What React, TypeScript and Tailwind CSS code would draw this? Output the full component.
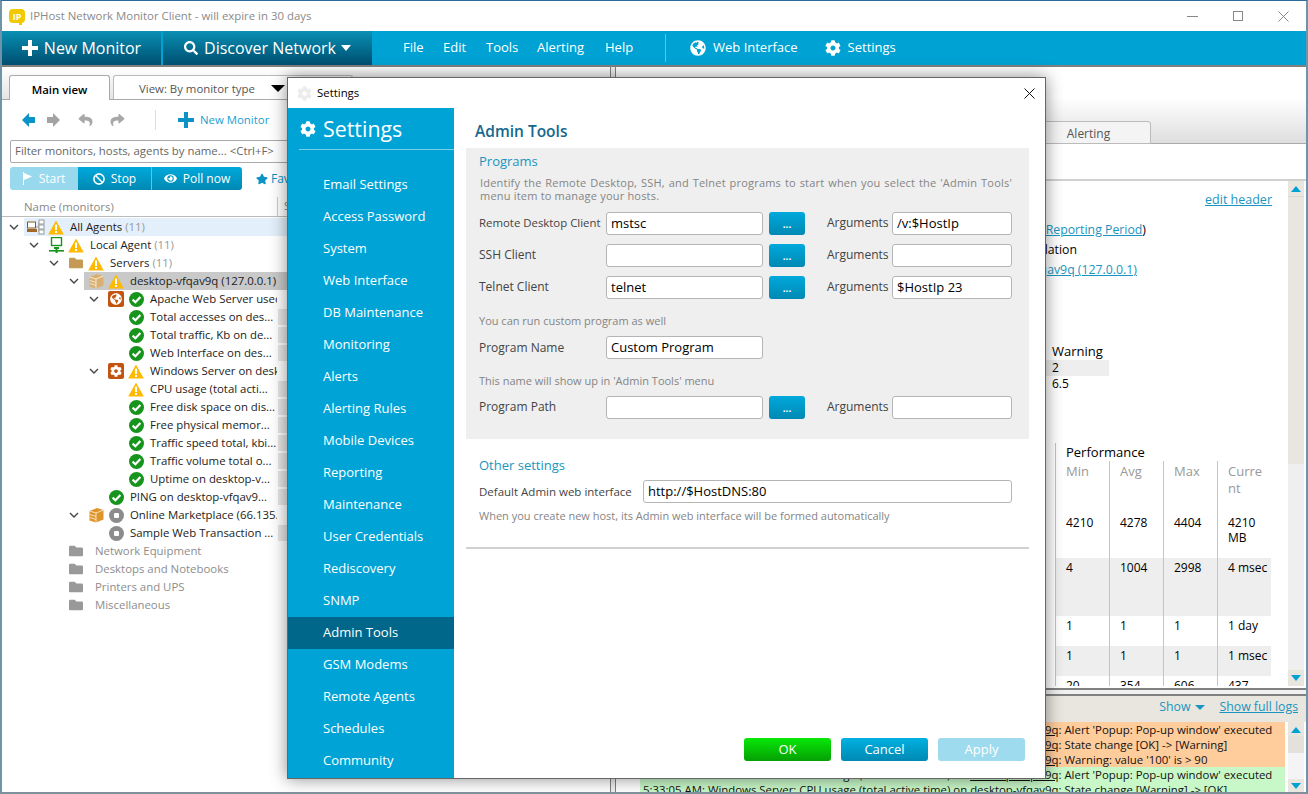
import type { ReactNode } from "react";
import { FaCog, FaGlobeAmericas, FaEye, FaBan, FaStar, FaReply, FaShare, FaSearch, FaFolder } from "react-icons/fa";

const Warn = () => (
  <svg viewBox="0 0 16 15" className="h-[15px] w-[16px]">
    <path d="M8 0.5 L15.8 14.5 H0.2 Z" fill="#ffb900" />
    <rect x="7" y="4.5" width="2" height="5.5" fill="#fff" />
    <rect x="7" y="11" width="2" height="2" fill="#fff" />
  </svg>
);

const Ok = () => (
  <svg viewBox="0 0 15 15" className="h-[15px] w-[15px]">
    <circle cx="7.5" cy="7.5" r="7.5" fill="#16941c" />
    <path d="M3.6 7.6 L6.4 10.2 L11.4 5" fill="none" stroke="#fff" strokeWidth="2.2" />
  </svg>
);

const Stopped = () => (
  <svg viewBox="0 0 15 15" className="h-[15px] w-[15px]">
    <circle cx="7.5" cy="7.5" r="7.5" fill="#8c8c8c" />
    <rect x="5" y="5" width="5" height="5" rx="1" fill="#fff" />
  </svg>
);

const Cube = ({ color }: { color: string }) => (
  <svg viewBox="0 0 15 16" className="h-[16px] w-[15px]">
    <path d="M0.5 4 L8 1 L14.5 3 V12.5 L7 15.5 L0.5 13.5 Z" fill={color} />
    <path d="M0.5 4 L7 6 L14.5 3 M7 6 V15.5 M1 7.5 L7 9.5 M1 10.5 L7 12.5" fill="none" stroke="#fff" strokeWidth="0.7" />
  </svg>
);

const Agents = () => (
  <svg viewBox="0 0 18 16" className="h-[16px] w-[18px]">
    <rect x="0.5" y="3" width="8" height="6" fill="#fff" stroke="#8a5a1c" />
    <rect x="0" y="10" width="10" height="3" fill="#a0692a" />
    <path d="M9 8 H12 M12 3 V13" stroke="#999" fill="none" />
    <rect x="12" y="1" width="5" height="4" fill="#fff" stroke="#999" />
    <rect x="12" y="6" width="5" height="4" fill="#fff" stroke="#999" />
    <rect x="12" y="11" width="5" height="4" fill="#fff" stroke="#999" />
  </svg>
);

const LocalAgent = () => (
  <svg viewBox="0 0 15 16" className="h-[16px] w-[15px]">
    <rect x="2.5" y="0.5" width="10" height="8" fill="#fff" stroke="#16941c" strokeWidth="1.4" />
    <rect x="5" y="10" width="5" height="2" fill="#16941c" />
    <rect x="0" y="13" width="15" height="1.6" fill="#16941c" />
    <rect x="6.5" y="11" width="2" height="5" fill="#16941c" />
  </svg>
);

const Badge = ({ globe }: { globe?: boolean }) => (
  <span className="flex h-[16px] w-[16px] items-center justify-center rounded-[2px] bg-[#c2540f]">
    {globe ? (
      <FaGlobeAmericas className="h-[12px] w-[12px] text-white" />
    ) : (
      <FaCog className="h-[12px] w-[12px] text-white" />
    )}
  </span>
);

const Chevron = () => (
  <svg viewBox="0 0 10 6" className="h-[6px] w-[10px]">
    <path d="M1 1 L5 5 L9 1" fill="none" stroke="#444" strokeWidth="1.4" />
  </svg>
);

type Row = {
  depth: number;
  text: string;
  count?: string;
  open?: boolean;
  type?: ReactNode;
  status?: ReactNode;
  highlight?: string;
  muted?: boolean;
  cell?: boolean;
};

const folder = <FaFolder className="h-[14px] w-[14px] text-[#c49a55]" />;
const grayFolder = <FaFolder className="h-[14px] w-[14px] text-[#999]" />;

const rows: Row[] = [
  { depth: 0, text: "All Agents", count: "(11)", open: true, type: <Agents />, status: <Warn />, highlight: "bg-[#e3f0fb]" },
  { depth: 1, text: "Local Agent", count: "(11)", open: true, type: <LocalAgent />, status: <Warn /> },
  { depth: 2, text: "Servers", count: "(11)", open: true, type: folder, status: <Warn /> },
  { depth: 3, text: "desktop-vfqav9q (127.0.0.1)", open: true, type: <Cube color="#d9b070" />, status: <Warn />, highlight: "bg-[#c9c9c9]" },
  { depth: 4, text: "Apache Web Server used on desktop", open: true, type: <Badge globe />, status: <Ok /> },
  { depth: 4, text: "Total accesses on des...", status: <Ok />, cell: true },
  { depth: 4, text: "Total traffic, Kb on de...", status: <Ok />, cell: true },
  { depth: 4, text: "Web Interface on des...", status: <Ok />, cell: true },
  { depth: 4, text: "Windows Server on desktop", open: true, type: <Badge />, status: <Warn /> },
  { depth: 4, text: "CPU usage (total acti...", status: <Warn />, cell: true },
  { depth: 4, text: "Free disk space on dis...", status: <Ok />, cell: true },
  { depth: 4, text: "Free physical memor...", status: <Ok />, cell: true },
  { depth: 4, text: "Traffic speed total, kbi...", status: <Ok />, cell: true },
  { depth: 4, text: "Traffic volume total o...", status: <Ok />, cell: true },
  { depth: 4, text: "Uptime on desktop-v...", status: <Ok />, cell: true },
  { depth: 3, text: "PING on desktop-vfqav9...", status: <Ok />, cell: true },
  { depth: 3, text: "Online Marketplace (66.135.205.1)", open: true, type: <Cube color="#e0952a" />, status: <Stopped /> },
  { depth: 3, text: "Sample Web Transaction ...", status: <Stopped />, cell: true },
  { depth: 2, text: "Network Equipment", type: grayFolder, muted: true },
  { depth: 2, text: "Desktops and Notebooks", type: grayFolder, muted: true },
  { depth: 2, text: "Printers and UPS", type: grayFolder, muted: true },
  { depth: 2, text: "Miscellaneous", type: grayFolder, muted: true },
];

const depthPad = ["pl-[2px]", "pl-[22px]", "pl-[42px]", "pl-[62px]", "pl-[82px]"];

const TreeRow = ({ row }: { row: Row }) => (
  <div className="flex h-[18px] items-center">
    <div className={`flex h-full w-[275px] shrink-0 items-center overflow-hidden ${depthPad[row.depth]}`}>
      <span className="flex w-[20px] shrink-0 justify-center">{row.open && <Chevron />}</span>
      <div className={`flex h-full flex-1 items-center whitespace-nowrap ${row.highlight ?? ""}`}>
        <span className="flex w-[24px] shrink-0 justify-center">{row.type}</span>
        {row.muted ? (
          <span className="w-px shrink-0" />
        ) : (
          <span className="flex w-[16px] shrink-0 justify-center">{row.status}</span>
        )}
        <span className={`pl-[6px] ${row.muted ? "text-[#8d8d8d]" : "text-[#222]"}`}>
          {row.text}
          {row.count && <span className="text-[#999]"> {row.count}</span>}
        </span>
      </div>
    </div>
    {row.highlight && <div className={`h-full flex-1 ${row.highlight}`} />}
    {row.cell && <div className="ml-[1px] h-[16px] flex-1 bg-[#e6e6e6]" />}
  </div>
);

const navItems = [
  "Email Settings", "Access Password", "System", "Web Interface", "DB Maintenance", "Monitoring", "Alerts",
  "Alerting Rules", "Mobile Devices", "Reporting", "Maintenance", "User Credentials", "Rediscovery", "SNMP",
  "Admin Tools", "GSM Modems", "Remote Agents", "Schedules", "Community",
];

const Field = ({ value, className }: { value?: string; className: string }) => (
  <div className={`flex h-[23px] items-center rounded-[3px] border border-[#b5b5b5] bg-white px-[4px] text-[13px] text-black ${className}`}>
    {value}
  </div>
);

const Browse = () => (
  <div className="ml-[6px] flex h-[23px] w-[36px] items-center justify-center rounded-[3px] bg-gradient-to-b from-[#00a9dc] to-[#0089b3] text-[10px] font-bold leading-none text-white">
    ...
  </div>
);

const ProgramRow = ({ label, value, args }: { label: string; value?: string; args?: string }) => (
  <div className="flex h-[23px] items-center">
    <span className={`w-[127px] whitespace-nowrap pb-[2px] text-[#444] ${label.length > 15 ? "text-[11.4px]" : "text-[12px]"}`}>{label}</span>
    <Field value={value} className="w-[157px]" />
    <Browse />
    <span className="ml-[22px] w-[65px] pb-[2px] text-[12px] text-[#444]">Arguments</span>
    <Field value={args} className="w-[120px]" />
  </div>
);

const Hint = ({ children }: { children: ReactNode }) => (
  <p className="text-[11px] leading-[13px] text-[#858585]">{children}</p>
);

const DialogButton = ({ label, className }: { label: string; className: string }) => (
  <div className={`flex h-[23px] w-[87px] items-center justify-center rounded-[3px] text-[13px] text-white ${className}`}>
    {label}
  </div>
);

const perf = [
  { h: "h-[53px]", bg: "", pad: "pt-[10px]", cells: ["4210", "4278", "4404", "4210 MB"] },
  { h: "h-[58px]", bg: "bg-[#eeeeee]", pad: "pt-[2px]", cells: ["4", "1004", "2998", "4 msec"] },
  { h: "h-[30px]", bg: "", pad: "pt-[2px]", cells: ["1", "1", "1", "1 day"] },
  { h: "h-[30px]", bg: "bg-[#eeeeee]", pad: "pt-[2px]", cells: ["1", "1", "1", "1 msec"] },
  { h: "h-[10px]", bg: "", pad: "pt-[2px]", cells: ["20", "354", "606", "437"] },
];

const Cell = ({ children, className }: { children?: ReactNode; className: string }) => (
  <div className={`w-[54px] overflow-hidden border-l border-[#c4c4c4] pl-[10px] ${className}`}>{children}</div>
);

const Scrollbar = ({ children }: { children?: ReactNode }) => (
  <div className="flex w-[16px] flex-col bg-[#e9e6df]">{children}</div>
);

const Up = () => <span className="mx-auto mt-[5px] h-0 w-0 border-x-[5px] border-b-[6px] border-x-transparent border-b-[#00a2d3]" />;
const Down = () => <span className="mx-auto h-0 w-0 border-x-[5px] border-t-[6px] border-x-transparent border-t-[#00a2d3]" />;

const host = <span className="underline">desktop-vfqav9q</span>;
const logs = [
  { bg: "bg-[#ffcc9c]", text: "5:33:20 AM: Windows Server: CPU usage (total active time) on ", tail: ": Alert 'Popup: Pop-up window' executed" },
  { bg: "bg-[#ffcc9c]", text: "5:33:20 AM: Windows Server: CPU usage (total active time) on ", tail: ": State change [OK] -> [Warning]" },
  { bg: "bg-[#ffcc9c]", text: "5:33:20 AM: Windows Server: CPU usage (total active time) on ", tail: ": Warning: value '100' is > 90" },
  { bg: "bg-[#c8f8c8]", text: "5:33:05 AM: Windows Server: CPU usage (total active time) on ", tail: ": Alert 'Popup: Pop-up window' executed" },
  { bg: "bg-[#c8f8c8]", text: "5:33:05 AM: Windows Server: CPU usage (total active time) on ", tail: ": State change [Warning] -> [OK]" },
];

export default function App() {
  return (
    <div className="relative flex h-[794px] w-[1308px] flex-col overflow-hidden border-x-2 border-b-2 border-t border-x-[#6f93a8] border-b-[#7f8f99] border-t-[#2b6a9b] bg-white font-['Open_Sans',sans-serif] text-[11.4px] text-[#222]">
      {/* title bar */}
      <div className="flex h-[30px] shrink-0 items-center pl-[7px] pr-[17px]">
        <span className="relative flex h-[14px] w-[16px] items-center justify-center rounded-[4px] bg-[#f2c900] text-[9px] font-bold leading-none text-white">
          IP
          <span className="absolute -bottom-[2px] right-[3px] h-[3px] w-[3px] bg-[#f2c900]" />
        </span>
        <span className="ml-[5px] text-[#8a8a8a]">IPHost Network Monitor Client - will expire in 30 days</span>
        <div className="ml-auto flex items-center gap-[35px]">
          <span className="h-px w-[11px] bg-[#888]" />
          <span className="h-[10px] w-[10px] border border-[#888]" />
          <svg viewBox="0 0 11 11" className="h-[11px] w-[11px]">
            <path d="M0.5 0.5 L10.5 10.5 M10.5 0.5 L0.5 10.5" stroke="#888" />
          </svg>
        </div>
      </div>

      {/* main toolbar */}
      <div className="flex h-[34px] shrink-0 items-center bg-[#00a2d3] text-white">
        <div className="flex h-full w-[159px] items-center justify-center gap-[6px] bg-gradient-to-b from-[#0a90b4] to-[#004f70] text-[16px] font-medium">
          <svg viewBox="0 0 16 16" className="h-[16px] w-[16px]"><path d="M6 0h4v6h6v4h-6v6H6v-6H0V6h6z" fill="#fff" /></svg>
          New Monitor
        </div>
        <div className="ml-[2px] flex h-full w-[209px] items-center justify-center gap-[6px] bg-gradient-to-b from-[#0a90b4] to-[#004f70] text-[16px] font-medium">
          <FaSearch className="h-[14px] w-[14px]" />
          Discover Network
          <span className="ml-[-1px] h-0 w-0 border-x-[5px] border-t-[6px] border-x-transparent border-t-white" />
        </div>
        <div className="ml-[31px] flex items-center text-[13px]">
          <span className="w-[40px]">File</span>
          <span className="w-[43px]">Edit</span>
          <span className="w-[51px]">Tools</span>
          <span className="w-[68px]">Alerting</span>
          <span className="w-[60px]">Help</span>
        </div>
        <span className="h-[28px] w-px bg-[#5cc4e4]" />
        <FaGlobeAmericas className="ml-[24px] h-[16px] w-[16px]" />
        <span className="ml-[7px] text-[13px]">Web Interface</span>
        <FaCog className="ml-[27px] h-[16px] w-[16px]" />
        <span className="ml-[7px] text-[13px]">Settings</span>
      </div>

      {/* panes */}
      <div className="flex min-h-0 flex-1 border-t-2 border-[#808080]">
        {/* left pane */}
        <div className="flex w-[608px] shrink-0 flex-col">
          <div className="flex h-[33px] shrink-0 items-end gap-[3px] border-b border-[#aaa] bg-gradient-to-b from-white to-[#e4e4e4] pl-[7px]">
            <div className="-mb-px flex h-[25px] w-[101px] items-center justify-center rounded-t-[3px] border border-b-0 border-[#aaa] bg-white pt-[3px] font-semibold text-black">Main view</div>
            <div className="flex h-[24px] w-[240px] items-center rounded-t-[3px] border border-b-0 border-[#bbb] bg-white pl-[25px] pt-[2px] text-[#555]">
              View: By monitor type
              <span className="ml-[16px] h-0 w-0 border-x-[7px] border-t-[7px] border-x-transparent border-t-black" />
            </div>
          </div>
          <div className="flex h-[40px] shrink-0 items-center pl-[20px]">
            <svg viewBox="0 0 13 14" className="h-[14px] w-[13px]"><path d="M0 7 L7 0 V4 H13 V10 H7 V14 Z" fill="#0a93c4" /></svg>
            <svg viewBox="0 0 13 14" className="ml-[12px] h-[14px] w-[13px]"><path d="M13 7 L6 0 V4 H0 V10 H6 V14 Z" fill="#a3a3a3" /></svg>
            <FaReply className="ml-[18px] h-[14px] w-[15px] text-[#a8a8a8]" />
            <FaShare className="ml-[17px] h-[14px] w-[15px] text-[#a8a8a8]" />
            <span className="ml-[30px] h-[20px] w-px bg-[#ddd]" />
            <svg viewBox="0 0 16 16" className="ml-[22px] h-[16px] w-[16px]"><path d="M6 0h4v6h6v4h-6v6H6v-6H0V6h6z" fill="#0a93c4" /></svg>
            <span className="ml-[6px] text-[#1a9fd0]">New Monitor</span>
          </div>
          <div className="ml-[8px] flex h-[23px] w-[320px] shrink-0 items-center rounded-[2px] border border-[#aaa] pb-[2px] pl-[4px] text-[#666]">
            {"Filter monitors, hosts, agents by name... <Ctrl+F>"}
          </div>
          <div className="ml-[8px] mt-[4px] flex h-[23px] shrink-0 items-center text-[12px]">
            <div className="flex h-full w-[232px] overflow-hidden rounded-[3px] text-white">
              <div className="flex w-[68px] items-center justify-center gap-[6px] bg-[#99d9ee]">
                <svg viewBox="0 0 10 13" className="h-[13px] w-[10px]"><path d="M0.5 0V13" stroke="#fff" /><path d="M1 1 L9 4.5 L1 8 Z" fill="#fff" /></svg>
                Start
              </div>
              <div className="flex w-[74px] items-center justify-center gap-[6px] border-r border-[#5cc4e4] bg-gradient-to-b from-[#00a9dc] to-[#0089b3]">
                <FaBan className="h-[12px] w-[12px]" />
                Stop
              </div>
              <div className="flex flex-1 items-center justify-center gap-[6px] bg-gradient-to-b from-[#00a9dc] to-[#0089b3]">
                <FaEye className="h-[13px] w-[13px]" />
                Poll now
              </div>
            </div>
            <FaStar className="ml-[14px] h-[12px] w-[12px] text-[#0a93c4]" />
            <span className="ml-[3px] text-[#0a93c4]">Favorites</span>
          </div>
          <div className="mt-[6px] flex h-[21px] shrink-0 items-center border-b border-[#bbb] pl-[22px] pt-[1px] text-[#888]">
            <span className="w-[253px]">Name (monitors)</span>
            <span className="h-full border-l border-[#ccc] pl-[6px]">Status</span>
          </div>
          <div className="pt-[1px]">
            {rows.map((row) => (
              <TreeRow key={row.text} row={row} />
            ))}
          </div>
        </div>

        {/* splitter */}
        <div className="w-[6px] shrink-0 border-x border-[#808080] bg-[#f0f0f0]" />

        {/* right pane */}
        <div className="flex min-w-0 flex-1 flex-col">
          <div className="flex h-[77px] shrink-0 items-end border-b border-[#aaa] bg-gradient-to-b from-white from-40% to-[#dedede] pl-[410px]">
            <div className="-mb-px flex h-[23px] w-[125px] items-center justify-center rounded-t-[3px] border border-[#bbb] bg-[#f4f4f4] pt-[2px] text-[12px] text-[#555]">Alerting</div>
          </div>
          <div className="h-[37px] shrink-0 border-b-2 border-[#d0d0d0]" />
          <div className="flex h-[505px] shrink-0">
            <div className="relative min-w-0 flex-1 overflow-hidden text-[12.3px] leading-[18px]">
              <p className="mt-[10px] pr-[16px] text-right text-[12.5px] text-[#1a95c0] underline">edit header</p>
              <p className="mt-[12px] w-[530px] text-right text-[#1a95c0]">
                <span className="underline">(Current Reporting Period</span>
                <span className="text-black">)</span>
              </p>
              <p className="mt-[2px] w-[461px] text-right text-black">Simulation</p>
              <p className="mt-[2px] w-[521px] text-right text-[#1a95c0] underline">desktop-vfqav9q (127.0.0.1)</p>
              <div className="ml-[430px] mt-[63px] w-[63px]">
                <p className="pl-[6px] text-[13px] leading-[18px] text-black">Warning</p>
                <p className="h-[16px] bg-[#eeeeee] pl-[6px] text-[12px] leading-[16px] text-black">2</p>
                <p className="h-[16px] pl-[6px] text-[12px] leading-[16px] text-black">6.5</p>
              </div>
              <div className="ml-[439px] mt-[51px] w-[216px] border-l border-[#c4c4c4] pl-[10px] text-[13px] leading-[18px] text-black">Performance</div>
              <div className="ml-[439px] w-[216px]">
                <div className="flex h-[44px] text-[13px] leading-[17px] text-[#999]">
                  <Cell className="pt-[2px]">Min</Cell>
                  <Cell className="pt-[2px]">Avg</Cell>
                  <Cell className="pt-[2px]">Max</Cell>
                  <Cell className="break-all pr-[5px] pt-[2px]">Current</Cell>
                </div>
                {perf.map((p) => (
                  <div key={p.cells[1]} className={`flex overflow-hidden text-[12px] leading-[15px] text-black ${p.h} ${p.bg}`}>
                    {p.cells.map((c) => (
                      <Cell key={c} className={p.pad}>{c}</Cell>
                    ))}
                  </div>
                ))}
              </div>
            </div>
            <div className="mr-[2px]">
              <Scrollbar>
                <div className="flex h-[16px] border-b border-[#d8d8d8]"><Up /></div>
                <div className="h-[267px]" />
                <div className="h-[206px] bg-[#efefef]" />
                <div className="flex h-[16px] items-center"><Down /></div>
              </Scrollbar>
            </div>
          </div>
          <div className="mt-[2px] h-[8px] shrink-0 border-y-2 border-[#808080] bg-[#f0f0f0]" />
          <div className="flex h-[26px] shrink-0 items-center justify-end gap-[14px] bg-[#e9e6df] pb-[4px] pr-[8px] text-[12.3px] text-[#1a95c0]">
            <span className="flex items-center gap-[5px]">
              Show
              <span className="h-0 w-0 border-x-[5px] border-t-[5px] border-x-transparent border-t-[#1a95c0]" />
            </span>
            <span className="underline">Show full logs</span>
          </div>
          <div className="flex min-h-0 flex-1 bg-white">
            <div className="min-w-0 flex-1 pl-[24px]">
              {logs.map((l) => (
                <p key={l.tail + l.bg} className={`h-[15px] whitespace-nowrap pl-[3px] leading-[15px] text-[#111] ${l.bg}`}>
                  {l.text}
                  {host}
                  {l.tail}
                </p>
              ))}
            </div>
            <div className="ml-[3px] mr-[2px]">
              <Scrollbar>
                <div className="flex h-[14px]"><Up /></div>
                <div className="h-[17px] bg-[#e4e1da]" />
                <div className="h-[26px] bg-[#f4f4f4]" />
                <div className="flex h-[14px] items-center"><Down /></div>
              </Scrollbar>
            </div>
          </div>
        </div>
      </div>

      {/* settings dialog */}
      <div className="absolute left-[285px] top-[76px] flex h-[702px] w-[759px] flex-col border border-[#666] bg-white shadow-[0_0_16px_rgba(0,0,0,0.45)]">
        <div className="flex h-[30px] shrink-0 items-center pl-[9px] pr-[10px] text-black">
          <FaCog className="h-[15px] w-[15px] text-[#ececec]" />
          <span className="ml-[5px]">Settings</span>
          <svg viewBox="0 0 11 11" className="ml-auto h-[11px] w-[11px]">
            <path d="M0.5 0.5 L10.5 10.5 M10.5 0.5 L0.5 10.5" stroke="#111" />
          </svg>
        </div>
        <div className="flex min-h-0 flex-1">
          <aside className="flex w-[166px] shrink-0 flex-col bg-[#00a3d6] text-white">
            <div className="ml-[11px] flex h-[42px] items-center border-b border-[#7dd0ea] pl-[1px]">
              <FaCog className="h-[16px] w-[16px]" />
              <span className="ml-[7px] pt-[1px] text-[21.4px] font-medium">Settings</span>
            </div>
            <nav className="mt-[19px]">
              {navItems.map((item) => (
                <div key={item} className={`flex h-[32px] items-center pl-[35px] text-[13px] font-medium ${item === "Admin Tools" ? "bg-[#00678a]" : ""}`}>
                  {item}
                </div>
              ))}
            </nav>
          </aside>
          <div className="flex min-w-0 flex-1 flex-col pl-[12px] pr-[16px]">
            <h2 className="h-[40px] shrink-0 pl-[9px] pt-[11px] text-[15.5px] font-semibold leading-[24px] text-[#14688e]">Admin Tools</h2>
            <section className="h-[291px] shrink-0 bg-[#efefef] pl-[13px] pr-[17px]">
              <h3 className="pt-[4px] text-[13px] font-medium leading-[18px] text-[#1a95c0]">Programs</h3>
              <p className="mt-[6px] pl-[1px] text-justify text-[11px] leading-[13px] tracking-[0.2px] text-[#858585]">
                Identify the Remote Desktop, SSH, and Telnet programs to start when you select the 'Admin Tools' menu item to manage your hosts.
              </p>
              <div className="mt-[10px] flex flex-col gap-[9px]">
                <ProgramRow label="Remote Desktop Client" value="mstsc" args="/v:$HostIp" />
                <ProgramRow label="SSH Client" />
                <ProgramRow label="Telnet Client" value="telnet" args="$HostIp 23" />
              </div>
              <div className="mt-[15px]"><Hint>You can run custom program as well</Hint></div>
              <div className="mt-[9px] flex h-[23px] items-center">
                <span className="w-[127px] text-[12px] text-[#444]">Program Name</span>
                <Field value="Custom Program" className="w-[157px]" />
              </div>
              <div className="mt-[15px]"><Hint>This name will show up in 'Admin Tools' menu</Hint></div>
              <div className="mt-[9px]"><ProgramRow label="Program Path" /></div>
            </section>
            <div className="h-[110px] shrink-0 border-b-2 border-[#d0d0d0] pl-[13px] pr-[17px]">
              <h3 className="pt-[17px] text-[13px] font-medium leading-[18px] text-[#1a95c0]">Other settings</h3>
              <div className="mt-[6px] flex h-[23px] items-center">
                <span className="w-[164px] whitespace-nowrap text-[11.5px] text-[#444]">Default Admin web interface</span>
                <Field value="http://$HostDNS:80" className="flex-1" />
              </div>
              <div className="mt-[6px]"><Hint>When you create new host, its Admin web interface will be formed automatically</Hint></div>
            </div>
            <div className="mt-auto mb-[17px] flex justify-end gap-[10px] pr-[4px]">
              <DialogButton label="OK" className="bg-gradient-to-b from-[#08e808] to-[#05a005]" />
              <DialogButton label="Cancel" className="bg-gradient-to-b from-[#00b0e0] to-[#0089b3]" />
              <DialogButton label="Apply" className="bg-[#9edbee]" />
            </div>
          </div>
        </div>
      </div>
    </div>
  );
}
